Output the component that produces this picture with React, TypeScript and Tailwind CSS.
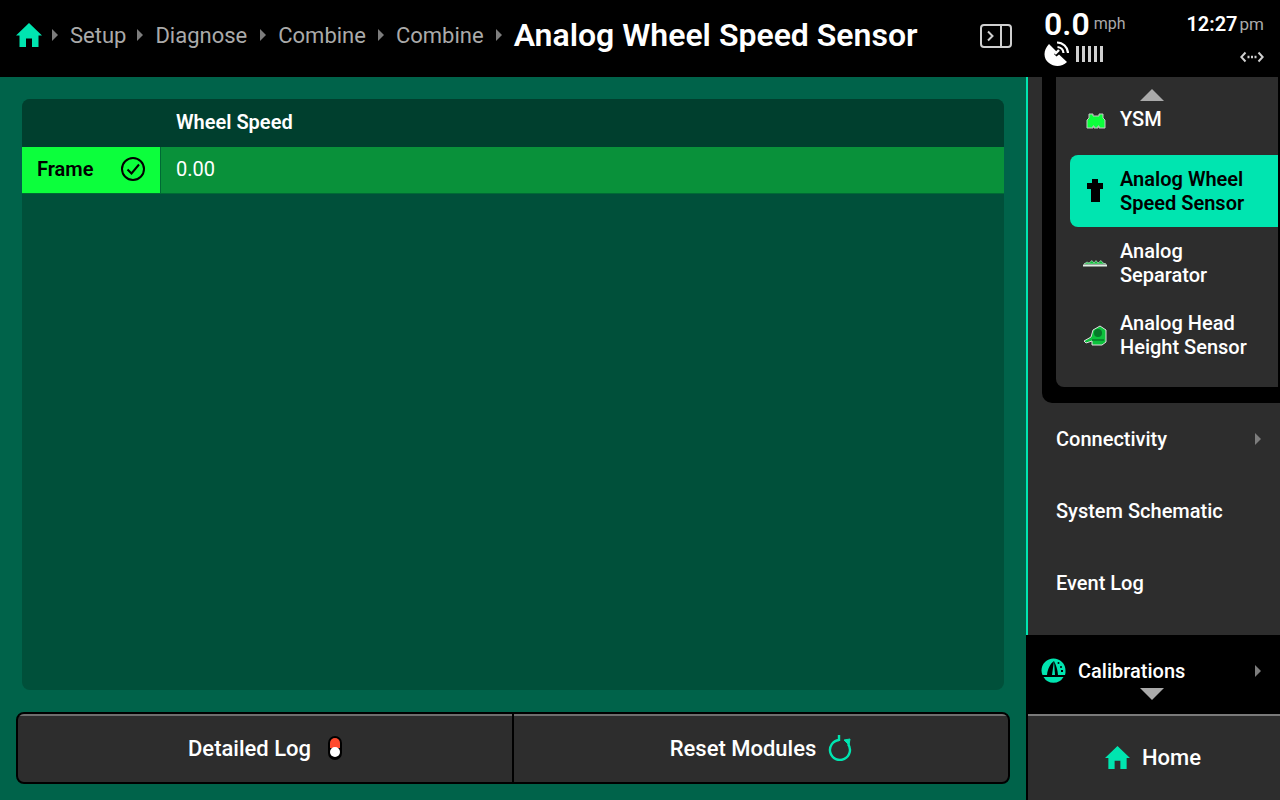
import React from 'react';

const Caret = ({ small }: { small?: boolean }) => (
    <svg width={small ? 6 : 7} height={small ? 12 : 14} viewBox="0 0 7 14" className="shrink-0">
        <path d="M0 0 L7 7 L0 14 Z" fill={small ? '#7d7d7d' : '#9a9a9a'} />
    </svg>
);

const HomeIcon = ({ size = 26 }: { size?: number }) => (
    <svg width={size} height={size} viewBox="0 0 26 26" className="shrink-0">
        <path d="M13 1 L26 13.5 L22.5 13.5 L22.5 25 L16 25 L16 16.5 L10 16.5 L10 25 L3.5 25 L3.5 13.5 L0 13.5 Z" fill="#00e5b0" />
    </svg>
);

const SideRow = ({ label, caret }: { label: string; caret?: boolean }) => (
    <div className="h-[72px] flex items-center justify-between pl-[28px] pr-[19px] text-[20px] font-medium text-white">
        <span>{label}</span>
        {caret && <Caret small />}
    </div>
);

const SubItem = ({ icon, lines, active }: { icon: React.ReactNode; lines: string[]; active?: boolean }) => (
    <div className={`h-[72px] ml-[14px] flex items-center rounded-l-[8px] text-[20px] leading-[24px] ${active ? 'bg-[#00e5b0] text-black font-semibold' : 'text-white font-medium'}`}>
        <div className="w-[50px] flex justify-center shrink-0">{icon}</div>
        <div>
            {lines.map(l => <div key={l}>{l}</div>)}
        </div>
    </div>
);

const App = () => {
    const crumbs = [
        { label: 'Setup', gap: 'ml-[10px]' },
        { label: 'Diagnose', gap: 'ml-[11px]' },
        { label: 'Combine', gap: 'ml-[13px]' },
        { label: 'Combine', gap: 'ml-[12px]' },
    ];
    return (
        <div className="w-[1280px] h-[800px] overflow-hidden flex flex-col bg-black font-['Roboto',sans-serif]">
            <header className="h-[77px] shrink-0 bg-black flex items-center">
                <div className="w-[1026px] flex items-center pl-[16px] pb-[7px]">
                    <HomeIcon />
                    <div className="flex items-center text-[22px] text-[#aaaaaa]">
                        {crumbs.map((c, i) => (
                            <div key={i} className="flex items-center">
                                <span className={`flex mr-[12px] ${c.gap}`}><Caret small /></span>
                                <span>{c.label}</span>
                            </div>
                        ))}
                        <span className="flex ml-[12px] mr-[12px]"><Caret small /></span>
                    </div>
                    <span className="text-[32px] font-semibold text-white">Analog Wheel Speed Sensor</span>
                    <svg width="32" height="24" viewBox="0 0 32 24" fill="none" stroke="#cfcfcf" strokeWidth="2" className="ml-[62px] mt-[1px]">
                        <rect x="1" y="1" width="30" height="22" rx="3" />
                        <path d="M21 1 V23" />
                        <path d="M8 7.5 L12.5 12 L8 16.5" />
                    </svg>
                </div>
                <div className="flex-1 flex justify-between pl-[18px] pr-[16px] pb-[3px]">
                    <div>
                        <div className="flex items-start h-[34px]">
                            <span className="text-[32px] leading-[36px] font-semibold text-white">0.0</span>
                            <span className="text-[16px] leading-[20px] text-[#aaaaaa] ml-[4px] mt-[8px]">mph</span>
                        </div>
                        <div className="flex items-center gap-[7px] h-[28px]">
                            <svg width="25" height="26" viewBox="0 0 25 26" className="shrink-0">
                                <path d="M5 3 C-1 9 -1 18 5 22 C10 26 18 26 23 21 L15 13.5 L12.5 15.5 L10 13 L12.5 10.5 Z" fill="#fff" />
                                <path d="M11 13 L15 9" stroke="#fff" strokeWidth="2.4" />
                                <path d="M13 1.5 A11 11 0 0 1 24 12 M13.5 6 A6.5 6.5 0 0 1 19.5 12" stroke="#fff" strokeWidth="2.2" fill="none" />
                            </svg>
                            <div className="flex gap-[3px]">
                                {[0, 1, 2, 3, 4].map(i => <div key={i} className="w-[3px] h-[16px] bg-[#d0d0d0]" />)}
                            </div>
                        </div>
                    </div>
                    <div className="flex flex-col items-end">
                        <div className="h-[36px] flex items-start mt-[4px]">
                            <span className="text-[20px] leading-[28px] font-semibold text-white">12:27</span>
                            <span className="text-[17px] leading-[28px] text-[#aaaaaa] ml-[2px]">pm</span>
                        </div>
                        <svg width="24" height="12" viewBox="0 0 24 12" fill="none" stroke="#d0d0d0" strokeWidth="2" className="mt-[5px]">
                            <path d="M5.5 1.5 L1.3 6 L5.5 10.5 M18.5 1.5 L22.7 6 L18.5 10.5" />
                            <path d="M7.5 6 H9.5 M11 6 H13 M14.5 6 H16.5" strokeWidth="2.4" />
                        </svg>
                    </div>
                </div>
            </header>

            <div className="flex-1 flex min-h-0">
                <main className="w-[1026px] bg-[#00634a] flex flex-col px-[16px] pt-[22px] pb-[16px]">
                    <div className="mx-[6px] h-[591px] rounded-[8px] bg-[#00503a] overflow-hidden">
                        <div className="h-[48px] bg-[#003f2e] flex items-center pl-[154px] pb-[2px] text-[20px] font-semibold text-white">
                            Wheel Speed
                        </div>
                        <div className="h-[47px] flex bg-[#09913a] border-b border-[#006a35]">
                            <div className="w-[138px] bg-[#0cff3c] flex items-center justify-between pl-[15px] pr-[15px] pb-[2px] text-[20px] font-semibold text-black">
                                <span>Frame</span>
                                <svg width="24" height="24" viewBox="0 0 24 24" fill="none" stroke="#000" strokeWidth="2">
                                    <circle cx="12" cy="12" r="11" />
                                    <path d="M6.5 12.5 L10.5 16.5 L18 7.5" />
                                </svg>
                            </div>
                            <div className="flex-1 flex items-center pl-[15px] pb-[2px] border-l border-[#006a35] text-[20px] text-white">0.00</div>
                        </div>
                    </div>
                    <div className="mt-[22px] h-[72px] flex rounded-[8px] border-2 border-black bg-[#2d2d2d] overflow-hidden">
                        <div className="flex-1 flex items-center justify-center gap-[17px] border-t-2 border-[#6e6e6e] pb-[2px] text-[22px] font-medium text-white">
                            <span>Detailed Log</span>
                            <svg width="14" height="24" viewBox="0 0 14 24">
                                <rect x="0" y="0" width="14" height="24" rx="7" fill="#000" />
                                <path d="M2 7 A5 5 0 0 1 12 7 V12 H2 Z" fill="#ff4a2e" />
                                <circle cx="7" cy="16" r="5" fill="#fff" />
                            </svg>
                        </div>
                        <div className="w-[2px] bg-black" />
                        <div className="flex-1 flex items-center justify-center gap-[12px] border-t-2 border-[#6e6e6e] pb-[2px] text-[22px] font-medium text-white">
                            <span>Reset Modules</span>
                            <svg width="24" height="26" viewBox="0 0 24 26" fill="none" stroke="#00e5b0" strokeWidth="2.4">
                                <path d="M11 5 A10 10 0 1 0 20 9" />
                                <path d="M11 0 V6" />
                                <path d="M16 5 L22 4 L21 10 Z" fill="#00e5b0" strokeWidth="1" />
                            </svg>
                        </div>
                    </div>
                </main>

                <aside className="w-[254px] flex flex-col">
                    <div className="h-[558px] bg-[#2d2d2d] border-l-2 border-[#00e5b0]">
                        <div className="ml-[14px] h-[326px] bg-black rounded-bl-[10px] pl-[14px] pr-[2px] pb-[16px]">
                            <div className="h-full bg-[#2d2d2d] rounded-bl-[8px] flex flex-col">
                                <div className="h-[78px] relative flex items-end pb-[24px]">
                                    <div className="absolute left-[84px] top-[12px] w-0 h-0 border-l-[12px] border-r-[12px] border-b-[12px] border-l-transparent border-r-transparent border-b-[#aaaaaa]" />
                                    <div className="w-[80px] flex justify-center">
                                        <svg width="20" height="18" viewBox="0 0 20 18">
                                            <path d="M3 1 H7 V3 H13 V1 H17 V5 L19 7 V15 H13 V13 H12 V15 H8 V13 H7 V15 H1 V7 L3 5 Z" fill="#0cff3c" stroke="#c8c8c8" />
                                        </svg>
                                    </div>
                                    <span className="text-[20px] leading-[24px] font-medium text-white -ml-[16px]">YSM</span>
                                </div>
                                <SubItem active lines={['Analog Wheel', 'Speed Sensor']} icon={
                                    <svg width="16" height="24" viewBox="0 0 16 24"><path d="M5 0 H11 V4 H16 V10 H13 V23 H4 V10 H0 V4 H5 Z" fill="#000" /></svg>
                                } />
                                <SubItem lines={['Analog', 'Separator']} icon={
                                    <svg width="24" height="8" viewBox="0 0 24 8">
                                        <path d="M0 6.5 H24" stroke="#dfeee4" strokeWidth="2" />
                                        <path d="M1 5 L4 3 L6 4 L9 1.5 L11 4 L13 1.5 L15 4 L18 1.5 L20 4 L23 5 Z" fill="#0fbf3a" stroke="#cfe8d6" strokeWidth="0.6" />
                                    </svg>
                                } />
                                <SubItem lines={['Analog Head', 'Height Sensor']} icon={
                                    <svg width="24" height="21" viewBox="0 0 24 21">
                                        <path d="M1 16 L8 12 L10 5 L17 1 L23 5 V17 L19 20 H9 V16 L3 18 Z" fill="#0cc23c" stroke="#e0e0e0" />
                                        <circle cx="15" cy="8" r="4" fill="#067a2a" />
                                        <path d="M9 15 H21" stroke="#067a2a" strokeWidth="1.5" />
                                    </svg>
                                } />
                            </div>
                        </div>
                        <SideRow label="Connectivity" caret />
                        <SideRow label="System Schematic" />
                        <SideRow label="Event Log" />
                    </div>
                    <div className="h-[79px] bg-black flex relative pl-[15px] pr-[19px] items-center justify-between text-[20px] font-medium text-white pb-[8px]">
                        <div className="flex items-center gap-[12px]">
                            <svg width="25" height="25" viewBox="0 0 25 25">
                                <path d="M12.5 0.5 A12 12 0 0 0 0.5 12.5 A12 12 0 0 0 1.5 17 H24 A12 12 0 0 0 24.5 12.5 A12 12 0 0 0 12.5 0.5 Z" fill="#00e5b0" />
                                <path d="M13 3 C9 6 6.5 11 6 17 H11 Z" fill="#000" />
                                <path d="M13 3 C15 7 16.5 11 17 17 H14 Z" fill="#000" />
                                <circle cx="17.5" cy="5" r="1" fill="#000" />
                                <circle cx="20" cy="9" r="1" fill="#000" />
                                <rect x="20" y="12" width="2" height="2" fill="#000" />
                                <path d="M2.5 19 H22.5 A11.5 11.5 0 0 1 2.5 19 Z" fill="#00e5b0" />
                            </svg>
                            <span>Calibrations</span>
                        </div>
                        <Caret small />
                        <div className="absolute left-[114px] bottom-[14px] w-0 h-0 border-l-[12px] border-r-[12px] border-t-[12px] border-l-transparent border-r-transparent border-t-[#aaaaaa]" />
                    </div>
                    <div className="flex-1 ml-[2px] bg-[#2d2d2d] border-t-2 border-[#7a7a7a] flex items-center justify-center gap-[12px] pb-[2px] text-[22px] font-medium text-white pr-[2px]">
                        <HomeIcon size={25} />
                        <span>Home</span>
                    </div>
                </aside>
            </div>
        </div>
    );
};

export default App;
